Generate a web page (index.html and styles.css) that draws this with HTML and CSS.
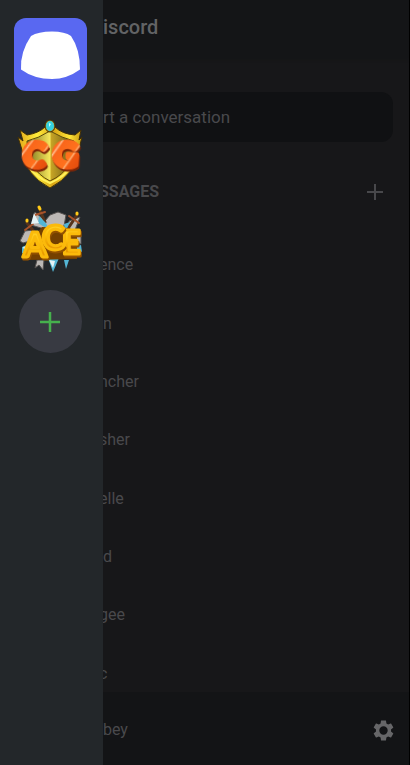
FILE: index.html
```
<!DOCTYPE html>
<html lang="en">
<head>
<meta charset="utf-8">
<meta name="viewport" content="width=device-width, initial-scale=1">
<title>Discord</title>
<link rel="stylesheet" href="styles.css">
</head>
<body>
<div class="app">
  <nav class="rail" aria-label="Servers">
    <a class="home" href="#" aria-label="Home">
      <svg viewBox="0 0 73 73" aria-hidden="true"><path fill="#fff" d="M17 18Q24 13.500 38 13.500Q51 13.500 57 18Q66 31 66 51.500Q53 61 38 61Q20 61 7 51.500Q6 34 17 18Z"/></svg>
    </a>
    <a class="server" href="#" aria-label="CG">
      <svg viewBox="0 0 70 70" aria-hidden="true">
        <defs>
          <linearGradient id="gold"><stop offset="0" stop-color="#e2a719"/><stop offset=".3" stop-color="#ffed3c"/><stop offset=".55" stop-color="#d9a414"/><stop offset=".8" stop-color="#ffe637"/><stop offset="1" stop-color="#c89710"/></linearGradient>
          <linearGradient id="face"><stop offset="0" stop-color="#77701b"/><stop offset=".49" stop-color="#f7e85c"/><stop offset=".51" stop-color="#c7a425"/><stop offset="1" stop-color="#605214"/></linearGradient>
          <linearGradient id="lava" x1="0" y1="0" x2="1" y2="1"><stop offset="0" stop-color="#f45a12"/><stop offset=".24" stop-color="#ff6c20"/><stop offset=".27" stop-color="#ffc293"/><stop offset=".31" stop-color="#f9661b"/><stop offset=".63" stop-color="#ff711d"/><stop offset=".66" stop-color="#ffb277"/><stop offset=".7" stop-color="#ee5711"/><stop offset="1" stop-color="#e04a0c"/></linearGradient>
        </defs>
        <path d="M5 11L12 16Q24 14 30 8L35 3L40 8Q47 15 60 16L66 11L64 21L67 18L64 30Q60 56 35 69Q10 56 7 31L3 18L8 22Z" fill="url(#gold)" stroke="#423007"/>
        <path d="M12 22Q24 19 35 12Q47 19 59 22Q61 50 35 62Q11 50 12 22Z" fill="url(#face)" stroke="#5d4b0c"/>
        <path d="M12 45Q20 58 35 64Q50 58 59 44" fill="none" stroke="#fff15c" stroke-width="2"/>
        <ellipse cx="35" cy="7" rx="5" ry="6" fill="#c59418" stroke="#3d2c08"/>
        <ellipse cx="35" cy="7" rx="4" ry="5" fill="#35d2df"/><path d="M34 4L36 5L34 8Z" fill="#c7ffff"/>
        <g class="logo-text lava">
          <text x="8" y="48" font-size="35" transform="rotate(8 20 36)">C</text>
          <text x="38" y="48" font-size="35" transform="rotate(4 50 36)">G</text>
        </g>
      </svg>
    </a>
    <a class="server" href="#" aria-label="ACE">
      <svg viewBox="0 0 70 70" aria-hidden="true">
        <defs><linearGradient id="amber" x1="0" y1="0" x2="0" y2="1"><stop offset="0" stop-color="#ffe144"/><stop offset=".45" stop-color="#ffc20c"/><stop offset=".75" stop-color="#e99900"/><stop offset="1" stop-color="#ffc423"/></linearGradient></defs>
        <g fill="#bcb8b5" stroke="#55514f">
          <path d="M16 22L20 9L30 18L35 12L43 9L51 12L49 23L36 28Z"/>
          <path d="M5 38L10 28L18 27L15 38L8 40Z"/><path d="M54 18L65 14L60 27L53 29Z"/><path d="M22 57L29 57L28 67L24 62L20 65Z"/><path d="M60 31L66 33L66 41L60 40Z"/>
        </g>
        <g stroke-linecap="round">
          <path d="M24 5L30 19M12 20L21 31M62 12L54 24" stroke="#57331c" stroke-width="3"/>
          <path d="M20 12L30 9M10 27L18 21M54 13L64 20" stroke="#a7522a" stroke-width="2"/>
          <path d="M24 4L25 6M12 17L12 18M62 10L62 11" stroke="#ffca16" stroke-width="3"/>
        </g>
        <path d="M23 20L24 13L31 20L34 27ZM55 19L49 21L50 30ZM7 44L14 41L13 53L7 50ZM59 44L66 42L67 49L58 50ZM33 55L44 55L38 69ZM49 57L54 57L51 66Z" fill="#54b6d5"/>
        <path d="M34 57L40 58L38 65ZM8 44L12 43L10 49ZM16 21L19 10L24 20Z" fill="#e5f3f6"/>
        <path d="M15 38L27 24L55 25L62 34L62 56L12 57Z" fill="#744000"/>
        <g class="logo-text amber">
          <text x="47" y="51" font-size="32">E</text>
          <text x="8" y="54" font-size="34">A</text>
          <text x="27" y="47" font-size="34">C</text>
        </g>
      </svg>
    </a>
    <button class="add" type="button" aria-label="Add a server">
      <svg viewBox="0 0 20 20" aria-hidden="true"><path d="M10 0V20M0 10H20" stroke="#46b04d" stroke-width="2.500"/></svg>
    </button>
  </nav>
  <main class="panel">
    <header class="top"><h1>iscord</h1></header>
    <div class="search"><input type="text" placeholder="rt a conversation" aria-label="Conversation"></div>
    <div class="section">
      <h2 class="cut">SSAGES</h2>
      <button class="plus" type="button" aria-label="New message"><svg viewBox="0 0 16 16" aria-hidden="true"><path d="M8 0V16M0 8H16" stroke="#48484b" stroke-width="2"/></svg></button>
    </div>
    <ul class="people">
      <li><a class="cut" href="#">ence</a></li>
      <li><a href="#">n</a></li>
      <li><a class="cut" href="#">ncher</a></li>
      <li><a class="cut" href="#">sher</a></li>
      <li><a class="cut" href="#">elle</a></li>
      <li><a href="#">d</a></li>
      <li><a class="cut" href="#">gee</a></li>
      <li><a class="cut" href="#">c</a></li>
    </ul>
    <footer class="account">
      <span>bey</span>
      <button class="settings" type="button" aria-label="Settings"><svg viewBox="2 2 20 20" aria-hidden="true"><path fill="#666668" d="M19.140 12.940c.04-.3.06-.61.06-.94s-.02-.64-.07-.94l2.030-1.580c.18-.14.23-.41.12-.61l-1.920-3.320c-.12-.22-.37-.29-.59-.22l-2.390.96c-.5-.38-1.030-.7-1.620-.94L14.400 2.810c-.04-.24-.24-.41-.48-.41h-3.840c-.24 0-.43.17-.47.41L9.250 5.350c-.59.24-1.130.57-1.620.94l-2.390-.96c-.22-.08-.47 0-.59.22L2.740 8.870c-.12.21-.08.47.12.61l2.030 1.580c-.05.3-.09.63-.09.94s.02.64.07.94l-2.030 1.580c-.18.14-.23.41-.12.61l1.920 3.320c.12.22.37.29.59.22l2.390-.96c.5.38 1.030.7 1.620.94l.36 2.540c.05.24.24.41.48.41h3.840c.24 0 .44-.17.47-.41l.36-2.540c.59-.24 1.130-.56 1.620-.94l2.390.96c.22.08.47 0 .59-.22l1.920-3.320c.12-.22.07-.47-.12-.61zM12 16a4 4 0 1 1 0-8a4 4 0 0 1 0 8z"/></svg></button>
    </footer>
  </main>
</div>
</body>
</html>
```
FILE: styles.css
```
* {
  box-sizing: border-box;
}

body {
  margin: 0;
  background: #171719;
  color: #49494c;
  font: 16px/24px Roboto, sans-serif;
}

a {
  color: inherit;
  text-decoration: none;
}

button {
  display: grid;
  place-items: center;
  padding: 0;
  border: 0;
  background: none;
}

svg {
  display: block;
  width: 100%;
}

.app {
  display: grid;
  grid-template-columns: 103px minmax(0, 1fr);
  height: 100vh;
}

.rail {
  display: flex;
  flex-direction: column;
  align-items: center;
  gap: 14px;
  padding: 18px 3px 0 0;
  background: #23272a;
}

.home {
  width: 73px;
  margin-bottom: 14px;
  border-radius: 12px;
  background: #5968f1;
}

.server {
  width: 70px;
}

.logo-text {
  font-family: Lato, sans-serif;
  font-weight: 900;
  stroke-linejoin: round;
}

.lava text {
  fill: url(#lava);
  stroke: url(#lava);
  stroke-width: 5px;
  filter: drop-shadow(1px 2px 0 #7e2506);
}

.amber text {
  fill: url(#amber);
  stroke: #fbba0b;
  stroke-width: 3px;
  filter: drop-shadow(1px 2px 0 #925100);
}

.add {
  width: 63px;
  height: 63px;
  margin-top: 3px;
  border-radius: 50%;
  background: #383a42;
}

.add svg {
  width: 20px;
}

.panel {
  display: flex;
  flex-direction: column;
  min-width: 0;
  overflow: hidden;
  border-right: 1px solid #000;
}

.top {
  flex: none;
  height: 58px;
  padding-top: 15px;
  background: #141517;
  box-shadow: 0 1px 3px #141517;
}

h1,
h2 {
  margin: 0;
  line-height: 24px;
}

h1 {
  color: #626365;
  font-size: 20px;
  font-weight: 500;
}

h2 {
  font-size: 16px;
  font-weight: 700;
}

.search {
  flex: none;
  margin: 34px 16px 0 0;
}

.search input {
  display: block;
  width: 100%;
  height: 50px;
  padding: 0;
  border: 0;
  border-radius: 0 12px 12px 0;
  background: #101113;
  color: inherit;
  font: inherit;
  font-size: 17px;
}

.search input::placeholder {
  color: #49494c;
  opacity: 1;
}

.section {
  display: flex;
  flex: none;
  align-items: center;
  justify-content: space-between;
  height: 100px;
  padding-right: 26px;
  margin-bottom: -6px;
}

.cut {
  margin-left: -4px;
}

.plus {
  width: 16px;
}

.people {
  display: flex;
  flex: 1;
  flex-direction: column;
  min-height: 0;
  margin: 0;
  padding: 0;
  overflow: hidden;
  list-style: none;
}

.people li {
  display: flex;
  flex: 0 0 12.8%;
  align-items: center;
}

.account {
  display: flex;
  flex: none;
  align-items: center;
  justify-content: space-between;
  height: 73px;
  padding: 3px 15px 0 0;
  background: #131416;
}

.settings {
  width: 21px;
}
```
